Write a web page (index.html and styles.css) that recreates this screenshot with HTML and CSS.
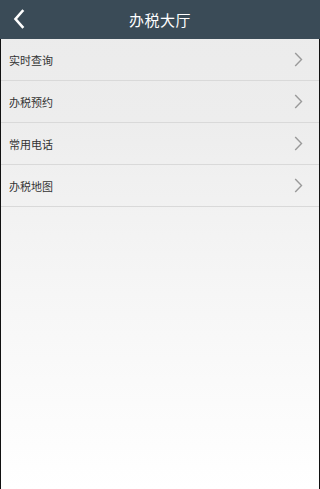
FILE: index.html
```html
<!DOCTYPE html>
<html lang="zh-CN">
<head>
<meta charset="utf-8">
<meta name="viewport" content="width=device-width, initial-scale=1">
<title>办税大厅</title>
<link rel="stylesheet" href="styles.css">
</head>
<body>
<div class="app">
  <header class="topbar">
    <span class="back">
      <svg width="12" height="20" viewBox="0 0 12 20"><path d="M9.5 2 L2.5 10 L9.5 18" fill="none" stroke="#fff" stroke-width="2.6" stroke-linecap="square" stroke-linejoin="miter"/></svg>
    </span>
    <h1 class="title">办税大厅</h1>
  </header>
  <ul class="menu">
    <li class="item"><span>实时查询</span><svg class="chev" width="9" height="15" viewBox="0 0 9 15"><path d="M1.2 1 L7.5 7.5 L1.2 14" fill="none" stroke="#9a9a9a" stroke-width="1.4"/></svg></li>
    <li class="item"><span>办税预约</span><svg class="chev" width="9" height="15" viewBox="0 0 9 15"><path d="M1.2 1 L7.5 7.5 L1.2 14" fill="none" stroke="#9a9a9a" stroke-width="1.4"/></svg></li>
    <li class="item"><span>常用电话</span><svg class="chev" width="9" height="15" viewBox="0 0 9 15"><path d="M1.2 1 L7.5 7.5 L1.2 14" fill="none" stroke="#9a9a9a" stroke-width="1.4"/></svg></li>
    <li class="item"><span>办税地图</span><svg class="chev" width="9" height="15" viewBox="0 0 9 15"><path d="M1.2 1 L7.5 7.5 L1.2 14" fill="none" stroke="#9a9a9a" stroke-width="1.4"/></svg></li>
  </ul>
</div>
</body>
</html>
```

FILE: styles.css
```css
html, body {
  margin: 0;
  padding: 0;
  height: 100%;
  background: #fff;
}
body {
  font-family: "Noto Sans CJK SC", "Liberation Sans", sans-serif;
}
.app {
  box-sizing: border-box;
  min-height: 100%;
  border-left: 1px solid #111;
  border-right: 1px solid #111;
  background: linear-gradient(to bottom, #ebebeb 0%, #ededed 25%, #f6f6f6 60%, #ffffff 100%);
  display: flex;
  flex-direction: column;
}
.topbar {
  height: 39px;
  background: #3a4b57;
  display: flex;
  align-items: center;
  justify-content: center;
  position: relative;
  margin: 0 -1px;
}
.back {
  position: absolute;
  left: 13px;
  top: 9px;
  display: flex;
}
.title {
  margin: 0;
  font-size: 15px;
  font-weight: normal;
  color: #fff;
  letter-spacing: 0.5px;
}
.menu {
  list-style: none;
  margin: 0;
  padding: 0;
}
.item {
  height: 41px;
  border-bottom: 1px solid #d9d9d9;
  display: flex;
  align-items: center;
  justify-content: space-between;
  padding: 0 16px 0 8px;
  font-size: 11px;
  color: #333;
}
.chev {
  display: block;
}
```
